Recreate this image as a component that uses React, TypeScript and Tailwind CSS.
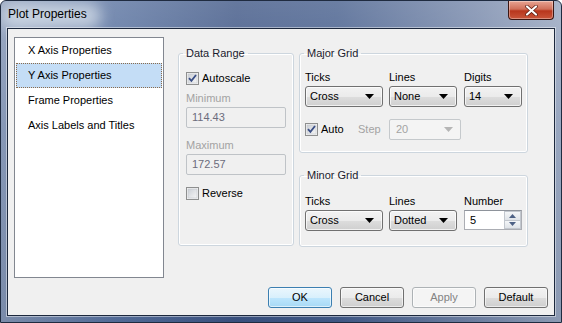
import React from "react";

const items = ["X Axis Properties", "Y Axis Properties", "Frame Properties", "Axis Labels and Titles"];

function Check({ checked, label, disabled }: { checked?: boolean; label: string; disabled?: boolean }) {
  return (
    <div className="flex items-center h-[13px] gap-[3px]">
      <svg width="13" height="13" viewBox="0 0 13 13" className="shrink-0">
        <defs>
          <linearGradient id={"cb" + label} x1="0" y1="0" x2="1" y2="1">
            <stop offset="0" stopColor="#cbcfd5" />
            <stop offset="1" stopColor="#f6f6f6" />
          </linearGradient>
        </defs>
        <rect x="0.5" y="0.5" width="12" height="12" fill="#f4f4f4" stroke="#8e8f8f" />
        <rect x="2" y="2" width="9" height="9" fill={`url(#cb${label})`} stroke="#c2c6cc" strokeWidth="0.6" />
        {checked && <path d="M3 6.2 L5.4 8.8 L10 3" fill="none" stroke="#3a4e85" strokeWidth="1.8" />}
      </svg>
      <span className={disabled ? "text-[#a0a0a0]" : "text-black"}>{label}</span>
    </div>
  );
}

function Arrow({ color = "#000" }: { color?: string }) {
  return (
    <svg width="9" height="5" viewBox="0 0 9 5" className="shrink-0">
      <polygon points="0,0 9,0 4.5,5" fill={color} />
    </svg>
  );
}

function Combo({ value, w }: { value: string; w: string }) {
  return (
    <div className={`${w} h-[21px] rounded-[3px] border border-[#707070] bg-[linear-gradient(180deg,#f2f2f2_0%,#ebebeb_50%,#dddddd_51%,#cfcfcf_100%)] shadow-[inset_0_0_0_1px_rgba(255,255,255,0.7)] flex items-center justify-between pl-[4px] pr-[8px]`}>
      <span>{value}</span>
      <Arrow />
    </div>
  );
}

function Btn({ label, kind }: { label: string; kind?: "default" | "disabled" }) {
  const cls =
    kind === "default"
      ? "border-[#3c7fb1] bg-[linear-gradient(180deg,#eaf6fd_0%,#d9f0fc_50%,#bee6fd_51%,#a7d9f5_100%)] text-black"
      : kind === "disabled"
      ? "border-[#adb2b5] bg-[#f4f4f4] text-[#838383]"
      : "border-[#707070] bg-[linear-gradient(180deg,#f2f2f2_0%,#ebebeb_50%,#dddddd_51%,#cfcfcf_100%)] text-black";
  return (
    <div className={`w-[64px] h-[21px] rounded-[3px] border ${cls} shadow-[inset_0_0_0_1px_rgba(255,255,255,0.6)] flex items-center justify-center`}>
      {label}
    </div>
  );
}

export default function App() {
  return (
    <div className="w-[562px] h-[323px] relative overflow-hidden rounded-t-[6px] border border-[#1f2b40] bg-[linear-gradient(90deg,#8193b3_0%,#56709e_20%,#3b5383_42%,#425b8a_60%,#7385a8_85%,#93a2bc_100%)] font-['Liberation_Sans',Arial,sans-serif] text-[11px] text-black flex flex-col">
      <div className="absolute inset-0 bg-[linear-gradient(180deg,rgba(255,255,255,0.22)_0%,rgba(255,255,255,0.05)_40%,rgba(0,0,0,0.05)_100%)] pointer-events-none" />
      {/* title bar */}
      <div className="relative h-[27px] shrink-0 flex items-center pl-[7px]">
        <div className="absolute left-[0px] top-[2px] w-[100px] h-[26px] rounded-full bg-[#dde5ee]/70 blur-[7px]" />
        <span className="relative text-[12px] text-black -mt-[2px]">Plot Properties</span>
        <div className="absolute right-[7px] top-0 w-[46px] h-[19px] rounded-b-[4px] border border-t-0 border-[#3b1612] bg-[linear-gradient(180deg,#e8a493_0%,#d0705a_45%,#b8361d_55%,#c9553a_100%)] shadow-[inset_0_0_0_1px_rgba(255,255,255,0.35)] flex items-center justify-center">
          <svg width="13" height="11" viewBox="0 0 13 11">
            <path d="M2 1.5 L11 9.5 M11 1.5 L2 9.5" stroke="#5a1a10" strokeWidth="3.6" strokeLinecap="round" />
            <path d="M2 1.5 L11 9.5 M11 1.5 L2 9.5" stroke="#ffffff" strokeWidth="2.2" strokeLinecap="round" />
          </svg>
        </div>
      </div>

      {/* client area */}
      <div className="relative mx-[6px] mb-[6px] flex-1 border border-[#1c283d] bg-[#f0f0f0] shadow-[0_0_0_1px_rgba(255,255,255,0.45)] flex flex-col">
        <div className="flex pl-[6px] pt-[8px]">
          {/* list */}
          <div className="w-[150px] h-[241px] border border-[#828790] bg-white">
            {items.map((it, i) => (
              <div
                key={it}
                className={
                  i === 1
                    ? "mx-[1px] h-[25px] flex items-center pl-[11px] border border-dotted border-[#8a6b4c] bg-[#c4ddf6]"
                    : "mx-[1px] h-[25px] flex items-center pl-[12px]"
                }
              >
                {it}
              </div>
            ))}
          </div>

          {/* data range */}
          <fieldset className="ml-[14px] mt-[9px] w-[116px] min-w-0 h-[200px] border border-[#cdd6de] rounded-[3px] px-[7px] shadow-[inset_0_0_0_1px_#ffffff]">
            <legend className="-ml-[3px] px-[3px] leading-[14px] text-[#1b1b2e]">Data Range</legend>
            <div className="mt-[12px]">
              <Check checked label="Autoscale" />
            </div>
            <div className="mt-[7px] h-[13px] leading-[13px] text-[#a3a3a3]">Minimum</div>
            <div className="mt-[2px] w-[100px] h-[21px] border border-[#bfc3c7] rounded-[2px] bg-[#f0f0f0] pl-[5px] flex items-center text-[#6c6c7c]">114.43</div>
            <div className="mt-[11px] h-[13px] leading-[13px] text-[#a3a3a3]">Maximum</div>
            <div className="mt-[2px] w-[100px] h-[21px] border border-[#bfc3c7] rounded-[2px] bg-[#f0f0f0] pl-[5px] flex items-center text-[#6c6c7c]">172.57</div>
            <div className="mt-[12px]">
              <Check label="Reverse" />
            </div>
          </fieldset>

          {/* right column */}
          <div className="ml-[5px] flex flex-col">
            <fieldset className="mt-[9px] w-[229px] h-[107px] border border-[#cdd6de] rounded-[3px] px-[5px] shadow-[inset_0_0_0_1px_#ffffff]">
              <legend className="-ml-[1px] px-[3px] leading-[14px] text-[#1b1b2e]">Major Grid</legend>
              <div className="mt-[11px] flex">
                <div className="w-[84px] flex flex-col gap-[2px]">
                  <span className="h-[13px] leading-[13px]">Ticks</span>
                  <Combo value="Cross" w="w-[78px]" />
                </div>
                <div className="w-[75px] flex flex-col gap-[2px]">
                  <span className="h-[13px] leading-[13px]">Lines</span>
                  <Combo value="None" w="w-[68px]" />
                </div>
                <div className="flex flex-col gap-[2px]">
                  <span className="h-[13px] leading-[13px]">Digits</span>
                  <Combo value="14" w="w-[58px]" />
                </div>
              </div>
              <div className="mt-[12px] flex items-center">
                <div className="w-[55px]">
                  <Check checked label="Auto" />
                </div>
                <span className="w-[29px] -ml-[2px] mr-[2px] text-[#a3a3a3]">Step</span>
                <div className="w-[72px] h-[21px] border border-[#c5c9cc] rounded-[2px] bg-[#f4f4f4] flex items-center justify-between pl-[6px] pr-[7px] text-[#a3a3a3]">
                  <span>20</span>
                  <Arrow color="#b5b5b5" />
                </div>
              </div>
            </fieldset>

            <fieldset className="mt-[15px] w-[229px] h-[79px] border border-[#cdd6de] rounded-[3px] px-[5px] shadow-[inset_0_0_0_1px_#ffffff]">
              <legend className="-ml-[1px] px-[3px] leading-[14px] text-[#1b1b2e]">Minor Grid</legend>
              <div className="mt-[13px] flex">
                <div className="w-[84px] flex flex-col gap-[2px]">
                  <span className="h-[13px] leading-[13px]">Ticks</span>
                  <Combo value="Cross" w="w-[78px]" />
                </div>
                <div className="w-[75px] flex flex-col gap-[2px]">
                  <span className="h-[13px] leading-[13px]">Lines</span>
                  <Combo value="Dotted" w="w-[68px]" />
                </div>
                <div className="flex flex-col gap-[2px]">
                  <span className="h-[13px] leading-[13px]">Number</span>
                  <div className="w-[58px] h-[20px] border border-[#abadb3] border-t-[#8e939b] bg-white flex">
                    <span className="flex-1 pl-[5px] flex items-center">5</span>
                    <div className="w-[17px] flex flex-col">
                      <div className="flex-1 border border-[#c2c7ce] bg-[linear-gradient(180deg,#f4f6f8,#dfe3e8)] flex items-center justify-center">
                        <svg width="7" height="4" viewBox="0 0 7 4">
                          <polygon points="0,4 7,4 3.5,0" fill="#4d6185" />
                        </svg>
                      </div>
                      <div className="flex-1 border border-t-0 border-[#c2c7ce] bg-[linear-gradient(180deg,#f4f6f8,#dfe3e8)] flex items-center justify-center">
                        <svg width="7" height="4" viewBox="0 0 7 4">
                          <polygon points="0,0 7,0 3.5,4" fill="#4d6185" />
                        </svg>
                      </div>
                    </div>
                  </div>
                </div>
              </div>
            </fieldset>
          </div>
        </div>

        {/* buttons */}
        <div className="mt-auto flex justify-end gap-[8px] pr-[6px] pb-[7px]">
          <Btn label="OK" kind="default" />
          <Btn label="Cancel" />
          <Btn label="Apply" kind="disabled" />
          <Btn label="Default" />
        </div>
      </div>
    </div>
  );
}
